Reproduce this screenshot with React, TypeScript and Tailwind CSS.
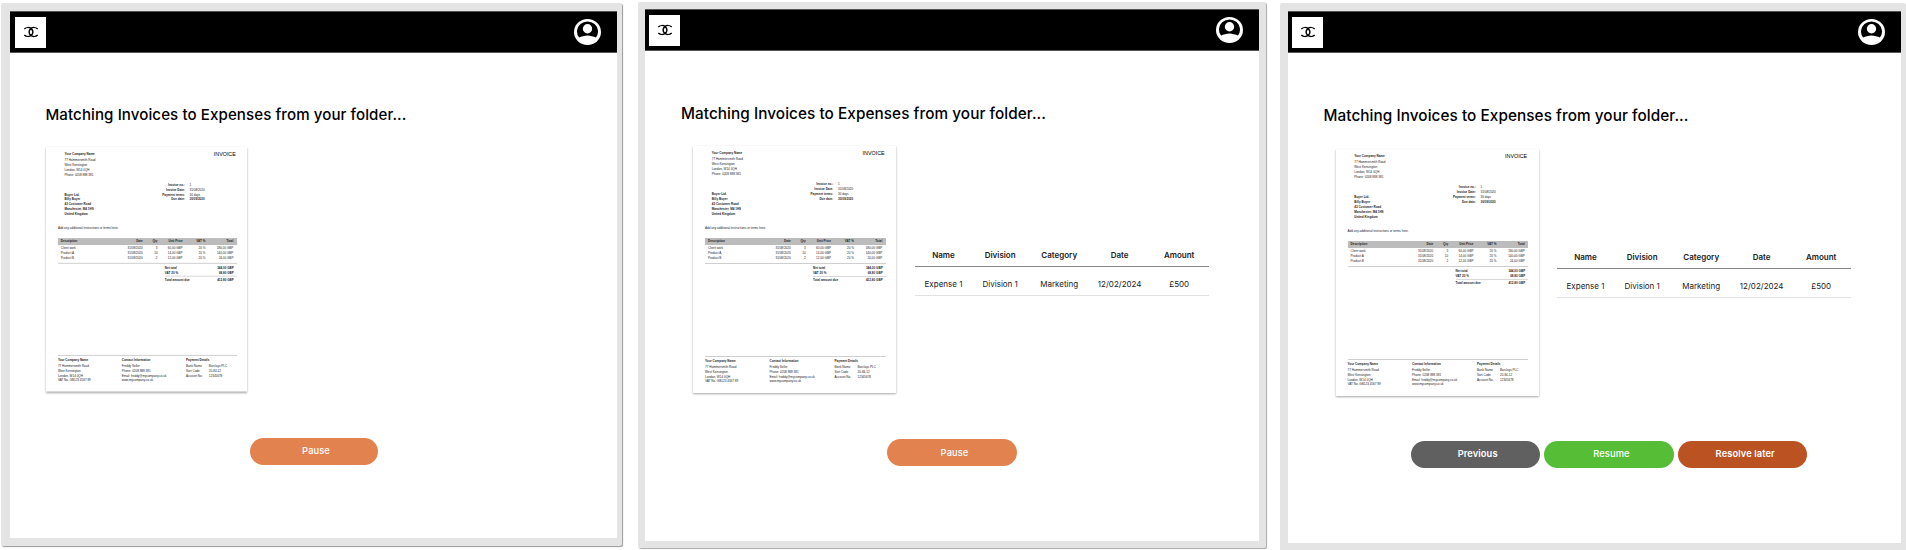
import type { ReactNode } from "react";

function Logo() {
  return (
    <div className="flex h-[31px] w-[31px] items-center justify-center bg-white">
      <svg viewBox="0 0 16 12" className="h-[12px] w-[16px]" fill="none" stroke="#000" strokeWidth="1.45">
        <path d="M1.3 2.95A5 4.4 0 1 1 1.3 9.05" />
        <path d="M14.7 2.95A5 4.4 0 1 0 14.7 9.05" />
      </svg>
    </div>
  );
}

function Avatar() {
  return (
    <svg viewBox="0 0 26 26" className="h-[26px] w-[27px]" preserveAspectRatio="none">
      <circle cx="13" cy="13" r="13" fill="#fff" />
      <path d="M4.9 18.6A10.1 10.1 0 1 1 21.1 18.6C18.8 17.4 16 16.4 13 16.4S7.2 17.4 4.9 18.6Z" fill="#000" />
      <ellipse cx="13" cy="9.8" rx="4.5" ry="4.7" fill="#fff" />
    </svg>
  );
}

function Lines({ items, className = "" }: { items: string[]; className?: string }) {
  return (
    <div className={className}>
      {items.map((t) => (
        <div key={t} className="h-[5px]">{t}</div>
      ))}
    </div>
  );
}

const cols = "grid grid-cols-[56.7px_26px_15px_25.3px_23px_28.3px] text-right";

const rows = [
  ["Client work", "31/08/2020", "3", "60,00 GBP", "20 %", "180,00 GBP"],
  ["Product A", "31/08/2020", "10", "14,00 GBP", "20 %", "140,00 GBP"],
  ["Product B", "31/08/2020", "2", "12,00 GBP", "20 %", "24,00 GBP"],
];

function Invoice({ className = "" }: { className?: string }) {
  return (
    <div
      className={`flex h-[246.5px] w-[203px] shrink-0 origin-top-left flex-col bg-white pr-[10.3px] pl-[12px] pt-[5.3px] font-['Liberation_Sans',sans-serif] text-[3.05px] leading-[5px] whitespace-nowrap text-[#222] shadow-[0_1px_2px_rgba(0,0,0,0.35)] ${className}`}
    >
      <div className="flex h-[41px] justify-between pr-[1px] pl-[6.7px]">
        <div>
          <div className="h-[5.7px] font-bold">Your Company Name</div>
          <Lines items={["77 Hammersmith Road", "West Kensington", "London, W14 0QH", "Phone: 0208 888 381"]} />
        </div>
        <div className="text-[5.4px] text-black">INVOICE</div>
      </div>
      <div className="flex h-[33.7px] pl-[6.7px]">
        <Lines
          className="w-[80px] font-bold"
          items={["Buyer Ltd.", "Billy Buyer", "43 Customer Road", "Manchester, M4 1HS", "United Kingdom"]}
        />
        <div className="-mt-[10px] flex gap-[4.7px]">
          <Lines
            className="w-[41.6px] text-right font-bold"
            items={["Invoice no.:", "Invoice Date:", "Payment terms:", "Due date:"]}
          />
          <div>
            <Lines items={["1", "31/08/2020", "30 days"]} />
            <div className="font-bold">30/09/2020</div>
          </div>
        </div>
      </div>
      <div className="h-[12px]">Add any additional instructions or terms here.</div>
      <div className={`${cols} h-[7.5px] shrink-0 bg-[#bcbcbc] pt-[1.2px] pl-[3px] font-bold`}>
        <span className="text-left">Description</span>
        <span>Date</span>
        <span>Qty</span>
        <span>Unit Price</span>
        <span>VAT %</span>
        <span>Total</span>
      </div>
      <div className="h-[18.7px] shrink-0 border-b border-[#cfcfcf] pt-[0.7px] pl-[3px]">
        {rows.map((r) => (
          <div key={r[0]} className={`${cols} h-[5px]`}>
            {r.map((c, i) => (
              <span key={i} className={i === 0 ? "text-left" : ""}>{c}</span>
            ))}
          </div>
        ))}
      </div>
      <div className="ml-[108px] h-[91.5px] pt-[2px] font-bold">
        <div className="flex h-[5px] justify-between pr-[3px]"><span>Net total</span><span>344,00 GBP</span></div>
        <div className="flex h-[5px] justify-between pr-[3px]"><span>VAT 20 %</span><span>68,80 GBP</span></div>
        <div className="flex justify-between border-t border-[#d8d8d8] pt-[1px] pr-[3px]">
          <span>Total amount due</span><span>412,80 GBP</span>
        </div>
      </div>
      <div className="flex border-t border-[#cfcfcf] pt-[2.5px]">
        <div className="w-[64.5px]">
          <div className="h-[5.7px] font-bold">Your Company Name</div>
          <Lines items={["77 Hammersmith Road", "West Kensington", "London, W14 0QH"]} />
          <div className="-mt-[0.8px]">VAT No. GB123 4567 89</div>
        </div>
        <div className="w-[65px]">
          <div className="h-[5.7px] font-bold">Contact Information</div>
          <Lines items={["Freddy Seller", "Phone: 0208 888 381", "Email: freddy@mycompany.co.uk"]} />
          <div className="-mt-[0.8px]">www.mycompany.co.uk</div>
        </div>
        <div>
          <div className="h-[5.7px] font-bold">Payment Details</div>
          <div className="flex">
            <Lines className="w-[23px]" items={["Bank Name", "Sort Code", "Account No."]} />
            <Lines items={["Barclays PLC", "20-84-12", "12345678"]} />
          </div>
        </div>
      </div>
    </div>
  );
}

const expenseCols = "grid grid-cols-[57.4px_56px_62px_59px_60px] justify-items-center";

function ExpenseTable({ className }: { className: string }) {
  return (
    <div className={`w-[294.4px] text-[8px] text-[#222] ${className}`}>
      <div className={`${expenseCols} h-[18px] border-b border-[#888] leading-[12px] font-semibold`}>
        {["Name", "Division", "Category", "Date", "Amount"].map((t) => (
          <span key={t}>{t}</span>
        ))}
      </div>
      <div className={`${expenseCols} h-[29px] border-b border-[#e2e2e2] leading-[34px]`}>
        {["Expense 1", "Division 1", "Marketing", "12/02/2024", "£500"].map((t) => (
          <span key={t}>{t}</span>
        ))}
      </div>
    </div>
  );
}

function Pill({ className, children }: { className: string; children: ReactNode }) {
  return (
    <button
      className={`flex h-[27px] shrink-0 items-center justify-center rounded-full pl-[5px] text-[9.3px] tracking-[0.1px] text-white ${className}`}
    >
      {children}
    </button>
  );
}

function Screen({ frame, header, title, body, children }: {
  frame: string;
  header: string;
  title: string;
  body: string;
  children: ReactNode;
}) {
  return (
    <section className={`shrink-0 rounded-[2px] border-[#e4e4e4] bg-white ${frame}`}>
      <header className={`flex h-[42px] items-center justify-between border-y border-[#555] bg-black pr-[16px] ${header}`}>
        <Logo />
        <Avatar />
      </header>
      <h1 className={`leading-[20px] font-medium whitespace-nowrap text-black ${title}`}>
        Matching Invoices to Expenses from your folder...
      </h1>
      <div className={`flex flex-col ${body}`}>{children}</div>
    </section>
  );
}

export default function App() {
  return (
    <main className="flex h-[550px] w-[1906px] items-start overflow-hidden bg-white font-['Inter',sans-serif]">
      <Screen
        frame="mt-[3px] ml-px h-[543px] w-[621px] border-t-8 border-r-[5px] border-b-8 border-l-[9px] shadow-[1px_1px_1px_#999]"
        header="pl-[5px]"
        title="mt-[52px] ml-[35.5px] text-[15.1px] tracking-[0.085px]"
        body="mt-[22px] pl-[35.5px]"
      >
        <Invoice className="scale-[0.99]" />
        <Pill className="mt-[44px] ml-[204px] w-[128px] bg-[#e2824f] font-medium">Pause</Pill>
      </Screen>
      <Screen
        frame="mt-[2px] ml-[16px] h-[546px] w-[628px] border-7 shadow-[1px_1px_1px_#aaa]"
        header="pl-[4px]"
        title="mt-[53px] ml-[36px] text-[15.3px] tracking-[0.07px]"
        body="mt-[22px] pl-[48px]"
      >
        <div className="flex">
          <Invoice />
          <ExpenseTable className="mt-[103px] ml-[18.8px]" />
        </div>
        <Pill className="mt-[46.5px] ml-[194px] w-[130px] bg-[#e2824f] font-medium">Pause</Pill>
      </Screen>
      <Screen
        frame="mt-[3px] ml-[14px] h-[549px] w-[626px] border-t-8 border-r-[5px] border-b-[9px] border-l-8"
        header="pl-[4px]"
        title="mt-[53px] ml-[35.5px] text-[15.3px] tracking-[0.07px]"
        body="mt-[23px] pl-[47.5px]"
      >
        <div className="flex">
          <Invoice />
          <ExpenseTable className="mt-[102px] ml-[18.3px]" />
        </div>
        <div className="mt-[45px] ml-[75px] flex gap-[4.5px]">
          <Pill className="w-[129.3px] bg-[#606060] font-semibold">Previous</Pill>
          <Pill className="w-[129.3px] bg-[#55be36] font-medium">Resume</Pill>
          <Pill className="w-[129.3px] bg-[#bb5222] font-semibold">Resolve later</Pill>
        </div>
      </Screen>
    </main>
  );
}
